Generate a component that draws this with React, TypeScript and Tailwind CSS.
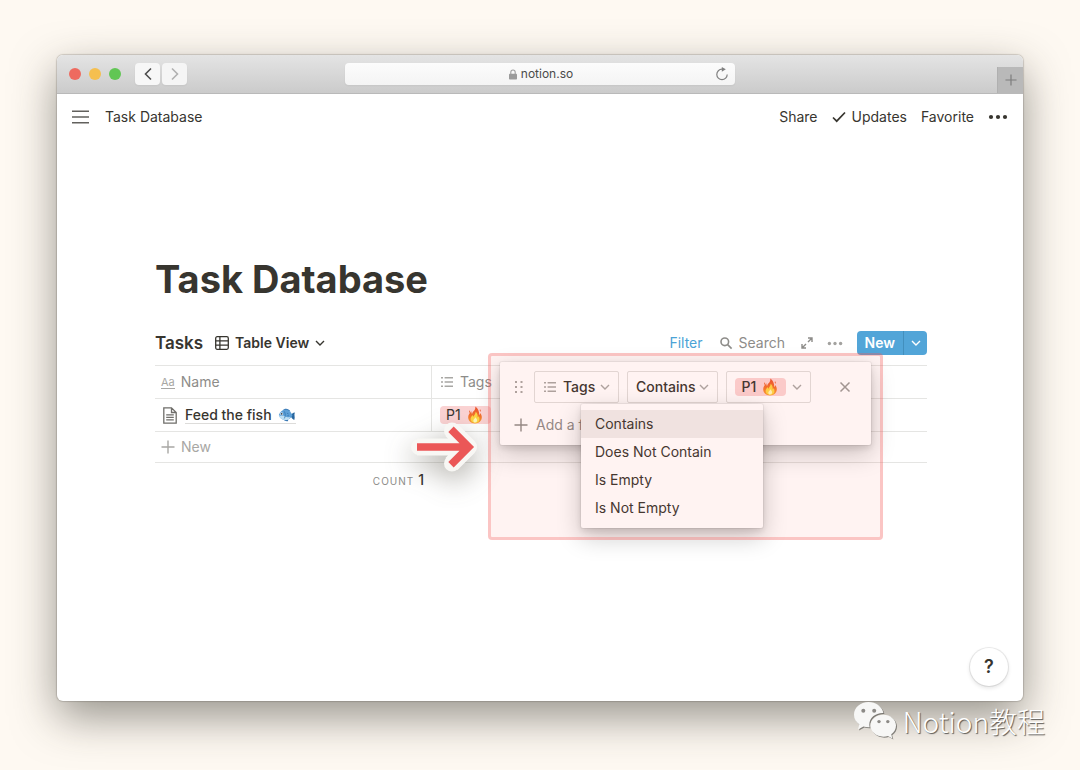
import React from "react";

const conditions = ["Contains", "Does Not Contain", "Is Empty", "Is Not Empty"];

interface IconProps {
  className?: string;
}

function Chevron({ className = "w-2.5 h-2.5" }: IconProps) {
  return (
    <svg viewBox="0 0 10 10" className={className} fill="none" stroke="currentColor" strokeWidth="1.4" aria-hidden="true">
      <path d="M1 3l4 4 4-4" />
    </svg>
  );
}

function ListIcon({ className = "" }: IconProps) {
  return (
    <svg viewBox="0 0 14 14" className={`w-3.5 h-3.5 shrink-0 ${className}`} fill="currentColor" aria-hidden="true">
      <path d="M1 2h2v1.6H1zM4.6 2H13v1.6H4.6zM1 6.2h2v1.6H1zM4.6 6.2H13v1.6H4.6zM1 10.4h2V12H1zM4.6 10.4H13V12H4.6z" />
    </svg>
  );
}

function PlusIcon({ className = "w-3.5 h-3.5" }: IconProps) {
  return (
    <svg viewBox="0 0 14 14" className={className} fill="none" stroke="currentColor" strokeWidth="1.4" aria-hidden="true">
      <path d="M7 .5v13M.5 7h13" />
    </svg>
  );
}

function Dots({ className = "" }: IconProps) {
  return (
    <svg viewBox="0 0 20 6" className={className} fill="currentColor" aria-hidden="true">
      <circle cx="3" cy="3" r="2.1" />
      <circle cx="10" cy="3" r="2.1" />
      <circle cx="17" cy="3" r="2.1" />
    </svg>
  );
}

function Flame() {
  return (
    <svg viewBox="0 0 16 18" className="w-4 h-[18px] shrink-0" role="img" aria-label="fire">
      <defs>
        <linearGradient id="flameOuter" x1="0" y1="0" x2="0" y2="1">
          <stop offset="0" stopColor="#e8502f" />
          <stop offset="0.6" stopColor="#f4772c" />
          <stop offset="1" stopColor="#f9a533" />
        </linearGradient>
      </defs>
      <path
        fill="url(#flameOuter)"
        d="M8.2.6c.5 1.8-.2 3-1.3 4.400C6 5.700 5.300 6.700 5.100 8 4.400 7.300 4.300 6.300 4.500 5.200 2.700 6.700 1.200 8.900 1.200 11.300 1.200 15 4.100 17.400 8 17.400s6.800-2.400 6.800-6.100c0-1.900-.7-3-1.500-4.300-.1.900-.4 1.500-1 1.900C12.300 5.300 11 2.200 8.200.6zM2.800 4.200c.7.900.5 1.800-.3 2.700-.6-.8-.4-1.900.3-2.700zM13 3.200c.8.700 1 1.600.5 2.500-.8-.7-.9-1.600-.5-2.500z"
      />
      <path
        fill="#fdd545"
        d="M8.600 5.800c.4 1.900-1.600 3-2 5-.6-.4-.8-1-.8-1.700-1.300 1.200-2.200 2.500-2.200 4 0 2.300 2 3.800 4.400 3.800s4.500-1.500 4.500-4c0-1.200-.5-2.200-1-3-.1.700-.4 1.200-.8 1.400.1-2.400-.5-4.300-2.100-5.500z"
      />
      <path fill="#fff6b8" d="M8.200 11.200c.1 1.200-1.900 2-1.900 3.600 0 1.200.8 1.800 1.800 1.800s2-.7 2-2c0-1.500-.8-2.600-1.900-3.400z" />
    </svg>
  );
}

function Fish() {
  return (
    <svg viewBox="0 0 18 14" className="w-[18px] h-3.5 shrink-0" role="img" aria-label="fish">
      <path fill="#3979b5" d="M4.500 2.600C6.600 0 10.500.2 12.500 3.600zM5.500 11.500c1 1.600 3.200 2 4.700 1.500l-.4-2z" />
      <path fill="#28669f" d="M12.600 7.600c.9-1.900 2.300-3.100 4.300-3.200-.5 1.200-.6 2.200-.4 3.200.3 1.400.3 3-.2 4.400-1.800-.6-3.200-2.200-3.700-4.400z" />
      <path fill="#5c9fd6" d="M.8 6.900C2 3.600 4.700 1.700 7.700 1.700c3.300 0 5.700 2.500 6.700 6-1.700 2.800-4.100 4.400-7.100 4.400C4.200 12.100 1.800 10.200.8 6.900z" />
      <path fill="#bfe0f3" d="M.8 6.900c1.300 1 2.700 1 4.300.7 2.400 1.700 5.200 2 7.500 1.600-1.400 1.900-3.100 2.900-5.300 2.900C4.200 12.100 1.800 10.200.8 6.900z" />
      <path fill="none" stroke="#347ab3" strokeWidth=".8" d="M6.200 3.300c1.400 2 1.500 5 .1 7.200M9 5.200l1.600.8M9.300 7.700l1.700.1" />
      <circle cx="3.700" cy="5.900" r="1.300" fill="#fff" />
      <circle cx="3.700" cy="5.900" r=".8" fill="#20303d" />
    </svg>
  );
}

function PriorityTag() {
  return (
    <span className="inline-flex items-center gap-1.5 h-[18px] pl-1.5 pr-2 rounded-sm bg-[#fbd3d3] text-[#37352f]">
      P1 <Flame />
    </span>
  );
}

function BrowserBar() {
  return (
    <div className="grid grid-cols-[1fr_minmax(0,390px)_1fr] items-center h-[39px] rounded-t-md border-b border-[#b9b9b9] bg-linear-to-b from-[#e4e4e4] to-[#cbcbcb]">
      <div className="flex items-center pl-3">
        <div className="flex gap-2">
          <span className="w-3 h-3 rounded-full bg-[#ee6a5f]" />
          <span className="w-3 h-3 rounded-full bg-[#f5bf4f]" />
          <span className="w-3 h-3 rounded-full bg-[#61c654]" />
        </div>
        <div className="flex gap-0.5 ml-3.5">
          <button aria-label="Back" className="flex items-center justify-center w-[25px] h-[22px] rounded-sm bg-[#f7f7f7] shadow-xs text-[#4d4d4d]">
            <svg viewBox="0 0 8 14" className="w-2 h-3.5" fill="none" stroke="currentColor" strokeWidth="1.6">
              <path d="M7 1.500L1.500 7 7 12.500" />
            </svg>
          </button>
          <button aria-label="Forward" className="flex items-center justify-center w-[25px] h-[22px] rounded-sm bg-[#f5f5f5] shadow-xs text-[#b0b0b0]">
            <svg viewBox="0 0 8 14" className="w-2 h-3.5" fill="none" stroke="currentColor" strokeWidth="1.6">
              <path d="M1 1.500L6.500 7 1 12.500" />
            </svg>
          </button>
        </div>
      </div>
      <div className="flex items-center h-[22px] px-1.5 rounded-sm bg-linear-to-b from-[#fcfcfc] to-[#f4f4f4] shadow-xs">
        <div className="flex flex-1 items-center justify-center gap-1 pl-4">
          <svg viewBox="0 0 8 11" className="w-2 h-[11px]" aria-hidden="true">
            <path d="M1.800 5V3.200a2.200 2.200 0 0 1 4.400 0V5" fill="none" stroke="#a0a0a0" strokeWidth="1.100" />
            <rect y="4.800" width="8" height="5.800" rx=".8" fill="#9b9b9b" />
          </svg>
          <input aria-label="Address" defaultValue="notion.so" className="field-sizing-content text-xs text-[#4a4a4a] outline-none" />
        </div>
        <button aria-label="Reload" className="text-[#808080]">
          <svg viewBox="0 0 14 14" className="w-3.5 h-3.5" fill="none" stroke="currentColor" strokeWidth="1.200">
            <path d="M7.300 2.200H7a5.200 5.200 0 1 0 5.200 5.200" />
            <path d="M6.800 0l4 2.300-4 2.500z" fill="currentColor" stroke="none" />
          </svg>
        </button>
      </div>
      <button aria-label="New tab" className="flex items-center justify-center self-end justify-self-end w-[26px] h-[26px] border-l border-[#b0b0b0] bg-[#b9b9b9] text-[#7d7d7d]">
        <PlusIcon className="w-3 h-3" />
      </button>
    </div>
  );
}

function PageHeader() {
  return (
    <header className="flex items-center justify-between h-[45px] px-[15px]">
      <div className="flex items-center gap-4">
        <button aria-label="Open sidebar" className="text-[#62615d]">
          <svg viewBox="0 0 17 14" className="w-[17px] h-3.5" fill="none" stroke="currentColor" strokeWidth="1.600">
            <path d="M0 1.200h17M0 7h17M0 12.800h17" />
          </svg>
        </button>
        <a href="#" className="text-[#37352f]">Task Database</a>
      </div>
      <nav className="flex items-center gap-3.5">
        <button>Share</button>
        <button className="flex items-center gap-1.5">
          <svg viewBox="0 0 14 12" className="w-3.5 h-3" fill="none" stroke="currentColor" strokeWidth="1.700" aria-hidden="true">
            <path d="M1 6.500L4.700 10.200 13 1.500" />
          </svg>
          Updates
        </button>
        <button>Favorite</button>
        <button aria-label="More">
          <Dots className="w-5 h-1.5" />
        </button>
      </nav>
    </header>
  );
}

function Toolbar() {
  return (
    <div className="flex items-center justify-between h-6">
      <div className="flex items-center gap-3">
        <h2 className="text-[17px] font-semibold">Tasks</h2>
        <button className="flex items-center gap-1.5 font-semibold">
          <svg viewBox="0 0 14 14" className="w-3.5 h-3.5" fill="none" stroke="currentColor" strokeWidth="1.300" aria-hidden="true">
            <rect x=".7" y=".7" width="12.600" height="12.600" rx="1.500" />
            <path d="M.7 4.900h12.600M.7 9.100h12.600M4.900.7v12.600" />
          </svg>
          Table View
          <Chevron />
        </button>
      </div>
      <div className="flex items-center text-[#8d8c89]">
        <button className="text-[#4ba3d6]">Filter</button>
        <label className="flex items-center gap-1.5 ml-4">
          <svg viewBox="0 0 14 14" className="w-3.5 h-3.5" fill="none" stroke="currentColor" strokeWidth="1.600" aria-hidden="true">
            <circle cx="5.800" cy="5.800" r="3.800" />
            <path d="M8.600 8.600l4 4" />
          </svg>
          <input aria-label="Search" placeholder="Search" className="w-12 outline-none placeholder:text-[#8d8c89]" />
        </label>
        <button aria-label="Open as page" className="ml-3.5">
          <svg viewBox="0 0 12 12" className="w-3 h-3" fill="none" stroke="currentColor" strokeWidth="1.400">
            <path d="M7 1h4v4M11 1L7 5M5 11H1V7M1 11l4-4" />
          </svg>
        </button>
        <button aria-label="More options" className="ml-3.5 text-[#a3a29f]">
          <Dots className="w-4 h-[5px]" />
        </button>
        <div className="flex h-6 ml-3.5 rounded-sm bg-[#52a5d8] text-white">
          <button className="px-2 font-semibold">New</button>
          <button aria-label="Templates" className="flex items-center justify-center w-6 border-l border-[#428fbd]">
            <Chevron />
          </button>
        </div>
      </div>
    </div>
  );
}

function TaskTable() {
  return (
    <table className="w-full mt-2.5 border-separate border-spacing-0 border-t border-[#e5e5e3] text-left">
      <thead className="text-[#8d8c89]">
        <tr className="h-[33px]">
          <th className="w-[277px] px-1.5 border-b border-r border-[#e5e5e3] font-normal">
            <div className="flex items-center gap-1.5">
              <span aria-hidden="true" className="text-[11px] leading-3 border-b border-[#a8a7a4] text-[#a8a7a4]">Aa</span>
              Name
            </div>
          </th>
          <th className="px-2 border-b border-[#e5e5e3] font-normal">
            <div className="flex items-center gap-1.5">
              <ListIcon className="text-[#a8a7a4]" />
              Tags
            </div>
          </th>
        </tr>
      </thead>
      <tbody>
        <tr className="h-[33px]">
          <td className="px-2 border-b border-r border-[#e5e5e3]">
            <div className="flex items-center gap-2">
              <svg viewBox="0 0 14 17" className="w-3.5 h-[17px]" fill="none" stroke="#6f6e6a" strokeWidth="1.300" aria-hidden="true">
                <path d="M.8.8h7.700l4.700 4.700v10.700H.8zM8.500.8v4.700h4.700M3.200 7.800h7.600M3.200 10.300h7.600M3.200 12.800h7.600" />
              </svg>
              <a href="#" className="flex items-center gap-1.5 h-[18px] border-b border-[#dddcda] font-medium">
                Feed the fish <Fish />
              </a>
            </div>
          </td>
          <td className="px-2 border-b border-[#e5e5e3]">
            <div className="flex">
              <PriorityTag />
            </div>
          </td>
        </tr>
        <tr className="h-[31px]">
          <td colSpan={2} className="px-1.5 border-b border-[#e5e5e3] text-[#a8a7a4]">
            <button className="flex items-center gap-1.5">
              <PlusIcon />
              New
            </button>
          </td>
        </tr>
      </tbody>
      <tfoot>
        <tr className="h-[34px]">
          <td className="px-2 text-right">
            <span className="text-[10px] tracking-widest text-[#8d8c89]">COUNT</span> <span className="font-medium">1</span>
          </td>
          <td />
        </tr>
      </tfoot>
    </table>
  );
}

function FilterPopover() {
  return (
    <div className="absolute top-[31px] right-14 w-[371px] h-[83px] pt-[9px] pl-3.5 rounded-xs bg-white shadow-[0_0_0_1px_rgba(15,15,15,0.05),0_3px_6px_rgba(15,15,15,0.12),0_9px_24px_rgba(15,15,15,0.22)]">
      <div className="flex items-center">
        <svg viewBox="0 0 10 14" className="w-2.5 h-3.5" fill="#a8a7a4" aria-hidden="true">
          <path d="M1 1h2v2H1zM6.500 1h2v2h-2zM1 6h2v2H1zM6.500 6h2v2h-2zM1 11h2v2H1zM6.500 11h2v2h-2z" />
        </svg>
        <label className="flex items-center gap-1 h-8 ml-2.5 px-2 rounded-xs border border-[#e0dfdd] text-[#a8a7a4]">
          <ListIcon />
          <select aria-label="Property" className="appearance-none outline-none pl-0.5 font-medium text-[#37352f]">
            <option>Tags</option>
          </select>
          <Chevron />
        </label>
        <div className="relative ml-2">
          <button aria-haspopup="listbox" aria-expanded="true" className="flex items-center gap-1 h-8 px-2 rounded-xs border border-[#e0dfdd] font-medium">
            Contains
            <Chevron className="w-2.5 h-2.5 text-[#a8a7a4]" />
          </button>
          <ul
            role="listbox"
            aria-label="Condition"
            className="absolute top-[33px] -left-[46px] w-[182px] py-1.5 rounded-xs bg-white shadow-[0_0_0_1px_rgba(15,15,15,0.05),0_3px_6px_rgba(15,15,15,0.12),0_9px_24px_rgba(15,15,15,0.22)]"
          >
            {conditions.map((condition, i) => (
              <li
                key={condition}
                role="option"
                aria-selected={i === 0}
                className={i === 0 ? "h-7 px-3.5 leading-7 bg-[#efedec]" : "h-7 px-3.5 leading-7"}
              >
                {condition}
              </li>
            ))}
          </ul>
        </div>
        <button aria-haspopup="listbox" aria-label="Value" className="flex items-center gap-1.5 h-8 ml-2 px-2 rounded-xs border border-[#e0dfdd] font-medium">
          <PriorityTag />
          <Chevron className="w-2.5 h-2.5 text-[#a8a7a4]" />
        </button>
        <button aria-label="Remove filter" className="ml-7 text-[#9b9a97]">
          <svg viewBox="0 0 12 12" className="w-3 h-3" fill="none" stroke="currentColor" strokeWidth="1.500">
            <path d="M1.500 1.500l9 9M10.500 1.500l-9 9" />
          </svg>
        </button>
      </div>
      <button className="flex items-center gap-2 h-11 text-[#8d8c89]">
        <PlusIcon />
        Add a filter
      </button>
    </div>
  );
}

function PointerArrow() {
  return (
    <svg
      viewBox="0 0 72 56"
      className="absolute z-10 top-[88px] left-[254px] w-[72px] h-14 pointer-events-none drop-shadow-[0_10px_14px_rgba(60,55,40,0.4)]"
      fill="none"
      aria-hidden="true"
    >
      <path d="M8 28h50M42.500 11L59.500 28 42.500 45" stroke="#f8f7f4" strokeWidth="17" strokeLinejoin="round" />
      <path d="M10 28h48M43 11.500L59.500 28 43 44.500" stroke="#f8f7f4" strokeWidth="16" strokeLinejoin="round" strokeLinecap="round" />
      <path d="M8 28h53M42 10.300L59.700 28 42 45.700" stroke="#eb5757" strokeWidth="7.600" />
    </svg>
  );
}

function Watermark() {
  return (
    <div className="absolute right-[35px] bottom-[30px] flex items-center gap-1.5">
      <svg viewBox="0 0 44 39" className="w-11 h-[39px] drop-shadow-[1px_1px_0_rgba(90,88,84,0.7)]" aria-hidden="true">
        <path fill="#f7f7f6" d="M15.500 1C7.300 1 1 6.600 1 13.700c0 4 2.100 7.500 5.300 9.800L5 28.400l5.400-2.900c1.600.5 3.300.8 5.100.8h1.200c-.3-1-.4-1.900-.4-2.900 0-6.500 6-11.500 13.300-11.500h.8C29 5.600 23 1 15.500 1z" />
        <path fill="#f7f7f6" d="M43 24.600c0-6.100-5.700-10.900-12.700-10.900S17.500 18.500 17.500 24.600s5.700 11.100 12.800 11.100c1.600 0 3.200-.3 4.600-.7l4.500 2.500-1.200-4.200c3-2.100 4.800-5.200 4.800-8.700z" />
        <g fill="#8c8a86">
          <circle cx="10.300" cy="9.700" r="2" />
          <circle cx="21.200" cy="9.700" r="2" />
          <circle cx="26" cy="20.600" r="1.700" />
          <circle cx="34.800" cy="20.600" r="1.700" />
        </g>
      </svg>
      <span className="font-['Noto_Sans_CJK_SC',sans-serif] text-[28px] leading-9 font-light text-white [text-shadow:1px_1px_1px_#5a5854]">
        Notion教程
      </span>
    </div>
  );
}

export default function App() {
  return (
    <div className="relative flex flex-col min-h-screen px-[57px] pt-[55px] pb-[69px] overflow-hidden bg-[#fef9f2] font-[Inter,sans-serif] text-sm text-[#37352f]">
      <div className="relative flex flex-col flex-1 rounded-md bg-white shadow-[0_0_1px_1px_rgba(60,55,45,0.2),0_16px_44px_rgba(50,48,40,0.5)]">
        <BrowserBar />
        <PageHeader />
        <main className="pl-[98px] pr-24 pt-[116px]">
          <h1 className="text-[38px] leading-[48px] font-bold">Task Database</h1>
          <section className="relative mt-7">
            <Toolbar />
            <TaskTable />
            <FilterPopover />
            <div className="absolute z-10 top-[22px] right-11 w-[395px] h-[187px] rounded-sm border-3 border-[#f35b5b]/30 bg-[#ff5a4b]/7 pointer-events-none" />
            <PointerArrow />
          </section>
        </main>
        <button aria-label="Help" className="absolute right-[15px] bottom-[15px] w-[38px] h-[38px] rounded-full bg-white text-lg font-semibold shadow-[0_0_0_1px_rgba(15,15,15,0.08),0_2px_4px_rgba(15,15,15,0.12)]">
          ?
        </button>
      </div>
      <Watermark />
    </div>
  );
}
